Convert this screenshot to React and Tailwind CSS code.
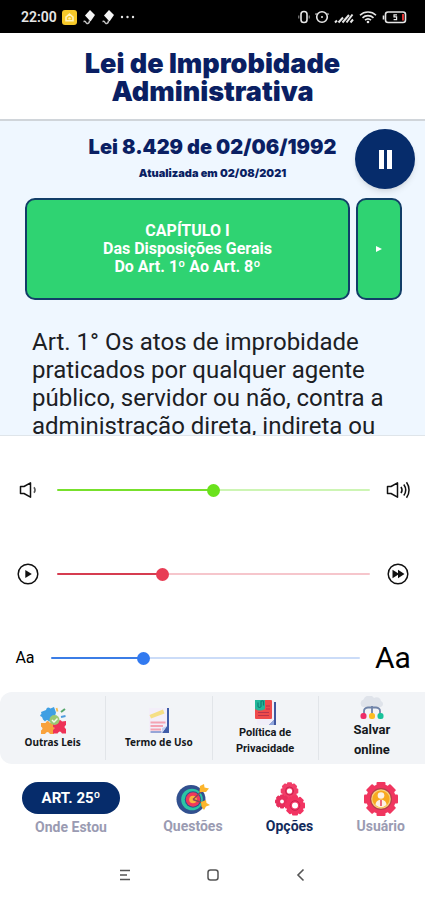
import { useState } from "react";

function StatusBar() {
  return (
    <div className="flex items-center justify-between bg-black pt-[5px] pr-4 pb-1 pl-[21px] text-[#e6e6e6]">
      <div className="flex items-center gap-[5px]">
        <span className="text-sm leading-6 font-semibold">22:00</span>
        <svg className="size-[15px]" viewBox="0 0 15 15" aria-hidden="true">
          <rect width="15" height="15" rx="3" fill="#f6c928" />
          <path d="M4 7.2 7.5 4 11 7.2v3.6H4z" fill="none" stroke="#fff3b8" strokeWidth="1.6" />
          <circle cx="7.5" cy="8.4" r="1.2" fill="#fff3b8" />
        </svg>
        <KiteIcon />
        <KiteIcon />
        <svg className="h-1 w-[15px]" viewBox="0 0 15 4" fill="currentColor" aria-hidden="true">
          <circle cx="2" cy="2" r="1.2" />
          <circle cx="7.5" cy="2" r="1.2" />
          <circle cx="13" cy="2" r="1.2" />
        </svg>
      </div>

      <svg
        className="h-4 w-[113px]"
        viewBox="0 0 113 16"
        fill="none"
        stroke="currentColor"
        strokeWidth="1.6"
        aria-hidden="true"
      >
        <rect x="5" y="2.5" width="6" height="11" rx="2.8" />
        <path d="M2.8 6.5v3M13.2 6.5v3" strokeWidth="1" stroke="#999" />
        <circle cx="26" cy="8" r="5.3" />
        <circle cx="26" cy="8" r="1" fill="currentColor" stroke="none" />
        <path d="M20.500 4.500l-1 1M31.500 4.500l1 1" strokeWidth="1.2" />
        <path
          d="m39 13.500 2-2M42.500 13.500l4.500-5M46.500 13.500l6.500-7.500M50.500 13.500l6-8M54.500 13.500l2.500-3"
          strokeWidth="2"
        />
        <path d="M64 6.200a11.500 11.500 0 0 1 16 0M66.500 8.800a8 8 0 0 1 11 0M69 11.200a4.500 4.500 0 0 1 6 0" />
        <circle cx="72" cy="13" r="1.300" fill="currentColor" stroke="none" />
        <rect x="89.500" y="3" width="20" height="10.500" rx="2.500" />
        <path d="M87.500 6.500v4" />
        <path d="M107 5v6.500" stroke="#d33" strokeWidth="2" />
        <path d="M101 5.800h-3v2.100h2.600v2.800H97.600" strokeWidth="1.200" />
      </svg>
    </div>
  );
}

function KiteIcon() {
  return (
    <svg className="h-4 w-[14px]" viewBox="0 0 14 16" aria-hidden="true">
      <path d="m8 1 5 5-4.500 6.500L3 6.500z" fill="#f5f5f5" />
      <path d="M7.500 11.500c0 3-2.500 4-3.500 2s-1-1-2.500-1" fill="none" stroke="#c4c4c4" strokeWidth="1.500" />
    </svg>
  );
}

function VolumeLowIcon() {
  return (
    <svg className="h-[18px] w-5" viewBox="0 0 20 18" fill="none" stroke="#111" strokeWidth="1.500" aria-hidden="true">
      <path d="M2.500 5.500H6L12.500 1.800v14.400L6 12.500H2.500z" strokeLinejoin="round" />
      <path d="M16 6.200c1.400 1.800 1.400 3.800 0 5.600" stroke="#555" />
    </svg>
  );
}

function VolumeHighIcon() {
  return (
    <svg className="h-[18px] w-[26px]" viewBox="0 0 26 18" fill="none" stroke="#111" strokeWidth="1.500" aria-hidden="true">
      <path d="M2.500 5.500H6L12.500 1.800v14.400L6 12.500H2.500z" strokeLinejoin="round" />
      <path d="M16 5.800c1.300 2 1.300 4.400 0 6.400M18.800 3.500c2.400 3.400 2.400 7.600 0 11M21.500 1.200c3.400 4.700 3.400 10.900 0 15.600" />
    </svg>
  );
}

function PlayCircleIcon() {
  return (
    <svg className="size-[22px]" viewBox="0 0 22 22" aria-hidden="true">
      <circle cx="11" cy="11" r="9.800" fill="none" stroke="#111" strokeWidth="1.500" />
      <path d="M8.300 7v8l6.500-4z" fill="#111" />
    </svg>
  );
}

function FastForwardIcon() {
  return (
    <svg className="size-[22px]" viewBox="0 0 22 22" aria-hidden="true">
      <circle cx="11" cy="11" r="9.800" fill="none" stroke="#111" strokeWidth="1.500" />
      <path d="M5.500 6.700v8.600L11 11.800v3.500l6.500-4.300L11 6.700v3.500z" fill="#111" />
    </svg>
  );
}

function PuzzleIcon() {
  return (
    <svg className="size-7" viewBox="0 0 28 28" aria-hidden="true">
      <path d="m2 6 5-2q1-4 4.500-1.500L15 1l2 5.500-2 7-5 2q-2-3-4 0L4 13.500 3 11Q-.500 9.500 2.500 8z" fill="#3f9fe3" />
      <path d="M2 17h4.500q2-4 4.500 0H15v5q3 2 0 4v2h-4q-2.500-4-5 0H2v-3.500q3-2 0-4z" fill="#f9a23c" />
      <path d="m14 18 5-2.500q2-3 4 0l4-.500V19q-3 2 0 4v4.500h-4q-2-4-4.500 0H14V24q3-2 0-3z" fill="#ee3257" />
      <circle cx="15.500" cy="14" r="5" fill="#9cc873" />
      <path d="m13 14 2 2 3.500-3.500" fill="none" stroke="#f4fbe9" strokeWidth="1.500" />
      <path d="m17.500 2 1 3.500" stroke="#f5bd55" strokeWidth="1.800" />
      <path d="m22 6 4-3" stroke="#55a76b" strokeWidth="2" />
      <path d="m22 11 4.500-1" stroke="#4d9cdd" strokeWidth="1.800" />
    </svg>
  );
}

function TermsIcon() {
  return (
    <svg className="size-7" viewBox="0 0 28 28" aria-hidden="true">
      <path d="M6 2h18v25H6z" fill="#3f5ca8" />
      <path d="M4 2h18v18l-5 7H4z" fill="#f3eef9" />
      <path d="M4.500 9 18 3.500l1.500 4L6 12.500z" fill="#f5df86" />
      <path d="M5.500 16.500h15M5.500 20H18M5.500 23.500H16" stroke="#f4a3b3" strokeWidth="2.200" />
      <path d="M5.500 26h11" stroke="#7f93cf" strokeWidth="1.600" />
      <path d="m22 20-5 7v-5z" fill="#c3d0f1" />
    </svg>
  );
}

function PrivacyIcon() {
  return (
    <svg className="h-[26px] w-7" viewBox="0 0 28 26" aria-hidden="true">
      <path d="M7 3h18v23H7z" fill="#40569e" />
      <path d="M6 2h17v19l-5 5H6z" fill="#f0eef9" />
      <rect x="4" y="1" width="17" height="19" rx="1" fill="#ef4b4b" />
      <path d="M15 7h4M15 10h4M7 13.500h11M7 16.500h11" stroke="#b9334b" strokeWidth="1.200" />
      <path d="M4 1h10v9q-5 3-10 0z" fill="#23b79a" />
      <path d="M7 3.500v4q1.500 2 3 0V2.500q1.500-1.500 2.500 0v4" fill="none" stroke="#0f7f75" strokeWidth="1.200" />
      <path d="M23 21v5h-5z" fill="#8fa6dd" />
    </svg>
  );
}

function CloudIcon() {
  return (
    <svg className="h-6 w-7" viewBox="0 0 28 24" aria-hidden="true">
      <path d="M5 11a4 4 0 0 1 .500-7.500A6 6 0 0 1 16 2a4.500 4.500 0 0 1 7 3 3.200 3.200 0 0 1 0 6z" fill="#dfe3ea" />
      <path d="M6 18v-3q0-3 4-3.500h8q4 .500 4 3.500v3M14 10v8" fill="none" stroke="#6f83a8" strokeWidth="1.800" />
      <rect x="2.500" y="17" width="6" height="6" rx="2.500" fill="#ee2d68" />
      <rect x="11" y="17" width="6" height="6" rx="2.500" fill="#fbbd23" />
      <rect x="19.500" y="17" width="6" height="6" rx="2.500" fill="#19c29a" />
    </svg>
  );
}

function TargetIcon() {
  return (
    <svg className="size-[34px]" viewBox="0 0 34 34" aria-hidden="true">
      <circle cx="15" cy="17.500" r="14.500" fill="#31508f" />
      <circle cx="16" cy="17.500" r="10.800" fill="#2cc5a4" />
      <circle cx="17" cy="17.500" r="8.200" fill="#31508f" />
      <circle cx="17" cy="17.500" r="7.200" fill="#f0385c" />
      <circle cx="17" cy="17.500" r="3.800" fill="#fcb63c" />
      <path d="M17 17.500 27 8M17 17.500l11 4" stroke="#8a4a55" strokeWidth="1.500" />
      <path d="m23.500 10 .500-6 4-2 .500 3.500L33 6.500 30 10z" fill="#fcb52c" />
      <path d="m25 20 5-2 .500 3 3.500 2-4 1.500L28 28l-2.500-3.500z" fill="#fcb52c" />
    </svg>
  );
}

function Gear({ cx, cy, r, tooth, hole, color }) {
  return (
    <g transform={`translate(${cx} ${cy})`} fill={color}>
      {[0, 45, 90, 135].map((angle) => (
        <rect
          key={angle}
          x={-tooth / 2}
          y={-r}
          width={tooth}
          height={r * 2}
          rx="1"
          transform={`rotate(${angle})`}
        />
      ))}
      <circle r={r * 0.87} />
      <circle r={hole} fill="#fff" />
    </g>
  );
}

function GearsIcon() {
  return (
    <svg className="size-[34px]" viewBox="0 0 34 34" aria-hidden="true">
      <Gear cx={16.5} cy={9} r={8.8} tooth={5} hole={2.6} color="#f23d68" />
      <Gear cx={9} cy={19.5} r={7} tooth={4} hole={1.9} color="#e82f5d" />
      <Gear cx={22} cy={23.5} r={10} tooth={6} hole={3} color="#f23462" />
      <circle cx="16.500" cy="9" r="4" fill="none" stroke="#c9234f" />
      <circle cx="22" cy="23.500" r="4.800" fill="none" stroke="#c9234f" />
    </svg>
  );
}

function UserGearIcon() {
  return (
    <svg className="size-[34px]" viewBox="0 0 34 34" aria-hidden="true">
      <Gear cx={17} cy={17} r={17} tooth={9} hole={10} color="#f0365f" />
      <circle cx="17" cy="17" r="11" fill="#b3404a" />
      <circle cx="17" cy="17" r="9.800" fill="#f6d27a" />
      <circle cx="17" cy="17" r="8.600" fill="#f8a91f" />
      <circle cx="17" cy="13.500" r="3.300" fill="#fdf1e4" />
      <path d="M11.500 23c0-7 11-7 11 0q-5.500 4.500-11 0z" fill="#fdf1e4" />
      <path d="M17 18v6" stroke="#ee6a7b" strokeWidth="2" />
    </svg>
  );
}

const sliders = [
  {
    id: "volume",
    label: "Volume",
    initial: 50,
    fill: "#77e02c",
    rest: "#cdf5b4",
    thumb: "[&::-webkit-slider-thumb]:bg-[#6ae21c]",
    start: <VolumeLowIcon />,
    end: <VolumeHighIcon />,
    startWidth: "w-[30px]",
    endWidth: "w-7",
  },
  {
    id: "speed",
    label: "Velocidade",
    initial: 33,
    fill: "#d63c50",
    rest: "#f6c6cc",
    thumb: "[&::-webkit-slider-thumb]:bg-[#e83d55]",
    start: <PlayCircleIcon />,
    end: <FastForwardIcon />,
    startWidth: "w-[30px]",
    endWidth: "w-7",
  },
  {
    id: "font-size",
    label: "Tamanho da fonte",
    initial: 29,
    fill: "#3b7de6",
    rest: "#cbdcf8",
    thumb: "[&::-webkit-slider-thumb]:bg-[#327af0]",
    start: <span className="text-base leading-6">Aa</span>,
    end: <span className="text-3xl leading-6">Aa</span>,
    startWidth: "w-6",
    endWidth: "w-[38px]",
  },
];

function SliderRow({ slider }) {
  const [value, setValue] = useState(slider.initial);

  return (
    <div className="flex h-6 items-center gap-[14px] text-black">
      <span className={`flex shrink-0 justify-center ${slider.startWidth}`}>{slider.start}</span>
      <input
        id={slider.id}
        type="range"
        min="0"
        max="100"
        aria-label={slider.label}
        value={value}
        onChange={(e) => setValue(Number(e.target.value))}
        className={`h-[2px] min-w-0 flex-1 appearance-none rounded-full outline-none [&::-webkit-slider-thumb]:size-[13px] [&::-webkit-slider-thumb]:appearance-none [&::-webkit-slider-thumb]:rounded-full ${slider.thumb}`}
        style={{
          background: `linear-gradient(to right, ${slider.fill} ${value}%, ${slider.rest} ${value}%)`,
        }}
      />
      <span className={`flex shrink-0 justify-center ${slider.endWidth}`}>{slider.end}</span>
    </div>
  );
}

const links = [
  { label: "Outras Leis", icon: <PuzzleIcon />, text: "font-['Noto_Sans'] text-[10px] leading-4" },
  { label: "Termo de Uso", icon: <TermsIcon />, text: "font-['Noto_Sans'] text-[10px] leading-4" },
  { label: "Política de Privacidade", icon: <PrivacyIcon />, text: "text-[11px] leading-4" },
  { label: "Salvar online", icon: <CloudIcon />, text: "w-12 text-[13px] leading-5" },
];

const tabs = [
  { label: "Questões", icon: <TargetIcon /> },
  { label: "Opções", icon: <GearsIcon />, active: true },
  { label: "Usuário", icon: <UserGearIcon /> },
];

export default function App() {
  const [playing, setPlaying] = useState(true);

  return (
    <div className="flex h-screen flex-col overflow-hidden bg-white font-[Roboto,sans-serif]">
      <StatusBar />

      <header className="border-b-2 border-[#d0d5da] px-12 pt-[17px] pb-[13px] text-center">
        <h1 className="font-[Inter,sans-serif] text-[27px] leading-7 font-black text-[#0a1f63]">
          Lei de Improbidade Administrativa
        </h1>
      </header>

      <main className="relative min-h-0 flex-1 overflow-hidden bg-[#eff7ff] pt-3">
        <div className="text-center font-[Inter,sans-serif] text-[#0a1f63]">
          <h2 className="text-xl leading-7 font-black">Lei 8.429 de 02/06/1992</h2>
          <p className="text-[11px] leading-6 font-black">Atualizada em 02/08/2021</p>
        </div>

        <button
          type="button"
          aria-label={playing ? "Pausar" : "Reproduzir"}
          onClick={() => setPlaying(!playing)}
          className="absolute top-2 right-[10px] flex size-15 items-center justify-center rounded-full bg-[#062c6b] shadow-md"
        >
          <svg className="h-[19px] w-[13px]" viewBox="0 0 13 19" fill="#fff" aria-hidden="true">
            {playing ? (
              <path d="M0 0h5v19H0zM8 0h5v19H8z" />
            ) : (
              <path d="M0 0v19l13-9.500z" />
            )}
          </svg>
        </button>

        <div className="mt-[13px] flex gap-[6px] pr-[23px] pl-[25px]">
          <button
            type="button"
            className="flex-1 rounded-[10px] border-2 border-[#123e68] bg-[#2fd372] py-[22px] text-base leading-[18px] font-bold text-white"
          >
            CAPÍTULO I
            <br />
            Das Disposições Gerais
            <br />
            Do Art. 1º Ao Art. 8º
          </button>
          <button
            type="button"
            aria-label="Próximo capítulo"
            className="flex w-[46px] items-center justify-center rounded-[10px] border-2 border-[#123e68] bg-[#2fd372]"
          >
            <svg className="size-[6px]" viewBox="0 0 6 6" fill="#fff" aria-hidden="true">
              <path d="M0 0v6l6-3z" />
            </svg>
          </button>
        </div>

        <p className="mt-7 px-8 text-2xl leading-7 text-[#1c2024]">
          Art. 1° Os atos de improbidade praticados por qualquer agente público, servidor ou não,
          contra a administração direta, indireta ou
        </p>
      </main>

      <section
        aria-label="Opções de leitura"
        className="flex flex-col gap-15 border-t border-[#dfe5ea] px-[13px] pt-[42px] pb-[22px]"
      >
        {sliders.map((slider) => (
          <SliderRow key={slider.id} slider={slider} />
        ))}
      </section>

      <div className="grid h-[72px] grid-cols-4 rounded-l-xl bg-[#f2f4f7] py-1">
        {links.map((link) => (
          <a
            key={link.label}
            href="#"
            className="flex flex-col items-center justify-center border-r border-[#e2e5e9] text-center font-bold text-[#15181c] last:border-r-0"
          >
            {link.icon}
            <span className={link.text}>{link.label}</span>
          </a>
        ))}
      </div>

      <nav className="flex items-start justify-between pt-[18px] pr-5 pb-[13px] pl-[22px] text-sm leading-5 font-bold">
        <button type="button" className="flex flex-col items-center gap-[3px] text-[#9a9bb2]">
          <span className="w-[98px] rounded-full bg-[#062c6b] py-[6px] text-[15px] text-white">
            ART. 25º
          </span>
          Onde Estou
        </button>
        {tabs.map((tab) => (
          <button
            key={tab.label}
            type="button"
            className={`flex flex-col items-center ${tab.active ? "text-[#122b5c]" : "text-[#9a9bb2]"}`}
          >
            {tab.icon}
            {tab.label}
          </button>
        ))}
      </nav>

      <div className="flex h-[50px] items-center justify-center gap-[72px] text-[#555]">
        <button type="button" aria-label="Recentes">
          <svg className="size-4" viewBox="0 0 16 16" fill="none" stroke="currentColor" strokeWidth="1.600" aria-hidden="true">
            <path d="M3 3.500h10M3 8h7M3 12.500h10" />
          </svg>
        </button>
        <button type="button" aria-label="Início">
          <svg className="size-4" viewBox="0 0 16 16" fill="none" stroke="currentColor" strokeWidth="1.500" aria-hidden="true">
            <rect x="3" y="3" width="10" height="10" rx="2.500" />
          </svg>
        </button>
        <button type="button" aria-label="Voltar">
          <svg className="size-4" viewBox="0 0 16 16" fill="none" stroke="currentColor" strokeWidth="1.600" aria-hidden="true">
            <path d="M10.500 2.500 5 8l5.500 5.500" />
          </svg>
        </button>
      </div>
    </div>
  );
}
